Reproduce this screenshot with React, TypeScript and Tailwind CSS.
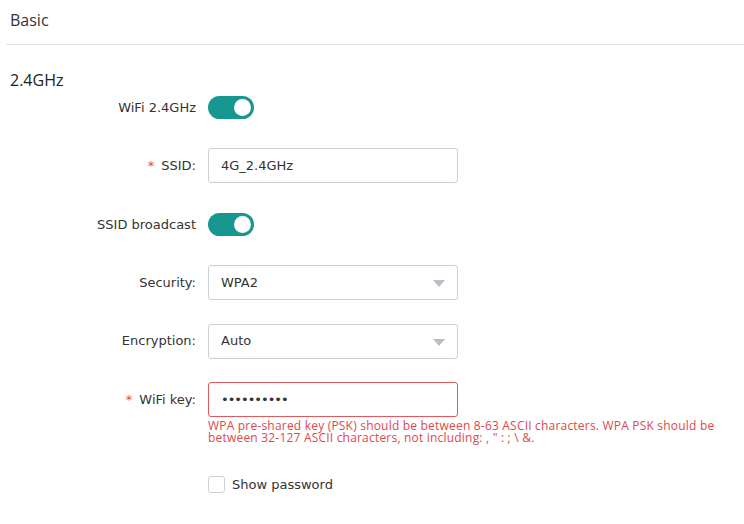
import React from "react";

const label = "text-[13px] text-[#333] text-right";

function Toggle() {
  return (
    <div className="flex h-[23px] w-[46px] items-center justify-end rounded-full bg-[#16978f] px-[3px]">
      <span className="h-[17px] w-[17px] rounded-full bg-white" />
    </div>
  );
}

function Caret() {
  return (
    <svg width="12" height="7" viewBox="0 0 12 7" className="absolute right-[12px] top-[14px]">
      <path d="M0 0 H12 L6 7 Z" fill="#b9bec6" />
    </svg>
  );
}

function Row({ name, required, children }: { name: string; required?: boolean; children: React.ReactNode }) {
  return (
    <div className="flex h-[35px] items-center">
      <div className={`w-[196px] ${label}`}>
        {required && <span className="mr-[7px] text-[#dc4a4e]">*</span>}
        {name}
      </div>
      <div className="ml-[12px] flex items-center">{children}</div>
    </div>
  );
}

export default function App() {
  return (
    <div className="h-[524px] w-[744px] bg-white" style={{ fontFamily: "'DejaVu Sans', sans-serif" }}>
      <div className="ml-[6px] flex h-[45px] items-center border-b border-[#e3e3e3] pl-[4px]">
        <span className="-mt-[4px] text-[16px] text-[#333]" style={{ fontFamily: "'Open Sans', sans-serif" }}>Basic</span>
      </div>
      <div className="mt-[24px] pl-[10px] text-[16px] leading-[22px] text-[#222]" style={{ fontFamily: "'Open Sans', sans-serif" }}>
        2.4GHz
      </div>
      <div className="mt-[-1px] flex flex-col gap-[23.4px]">
        <Row name="WiFi 2.4GHz">
          <Toggle />
        </Row>
        <Row name="SSID:" required>
          <div className="flex h-[35px] w-[250px] items-center rounded-[3px] border border-[#cfcfcf] px-[12px] text-[13px] text-[#333]">
            4G_2.4GHz
          </div>
        </Row>
        <Row name="SSID broadcast">
          <Toggle />
        </Row>
        <Row name="Security:">
          <div className="relative flex h-[35px] w-[250px] items-center rounded-[3px] border border-[#cfcfcf] px-[12px] text-[13px] text-[#333]">
            WPA2
            <Caret />
          </div>
        </Row>
        <Row name="Encryption:">
          <div className="relative flex h-[35px] w-[250px] items-center rounded-[3px] border border-[#cfcfcf] px-[12px] text-[13px] text-[#333]">
            Auto
            <Caret />
          </div>
        </Row>
        <Row name="WiFi key:" required>
          <div className="flex h-[35px] w-[250px] items-center rounded-[3px] border border-[#e05a5f] px-[12px] text-[13px] tracking-[-1px] text-[#333]">
            ••••••••••
          </div>
        </Row>
      </div>
      <div
        className="ml-[208px] mt-[3px] w-[520px] text-[12px] leading-[12px] tracking-[0.2px] text-[#e0474c]"
        style={{ fontFamily: "'Open Sans', sans-serif" }}
      >
        WPA pre-shared key (PSK) should be between 8-63 ASCII characters. WPA PSK should be between 32-127 ASCII characters, not including: , " : ; \ &amp;.
      </div>
      <div className="ml-[208px] mt-[31px] flex items-center gap-[7px]">
        <span className="h-[17px] w-[17px] rounded-[3px] border border-[#cfcfcf]" />
        <span className="text-[13px] text-[#333]">Show password</span>
      </div>
    </div>
  );
}
